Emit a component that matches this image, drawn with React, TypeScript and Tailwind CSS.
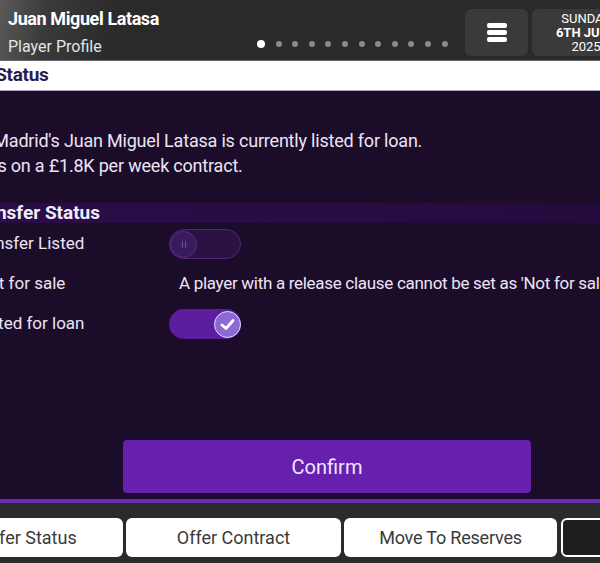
import React from "react";

const F = { fontFamily: '"Roboto", "Liberation Sans", sans-serif' };

function Toggle({ on }: { on: boolean }) {
  if (on) {
    return (
      <div className="relative h-[30px] w-[72px] shrink-0 rounded-full bg-[#5c1d9f]">
        <div className="absolute right-0 top-[1.5px] flex h-[27px] w-[27px] items-center justify-center rounded-full border-[1.5px] border-[#e6dcff] bg-[#8c6ad6]">
          <svg width="15" height="13" viewBox="0 0 15 13" fill="none">
            <path d="M2 7 L6 10.5 L13 2.5" stroke="white" strokeWidth="2.8" strokeLinecap="round" strokeLinejoin="round" />
          </svg>
        </div>
      </div>
    );
  }
  return (
    <div className="relative h-[30px] w-[72px] shrink-0 rounded-full border border-[#4f2679] bg-[#2a1242]">
      <div className="absolute left-0 top-[1px] flex h-[27px] w-[27px] items-center justify-center gap-[2px] rounded-full border border-[#5a2b8c] bg-[#3a1a5e]">
        <div className="h-[7px] w-[1px] bg-[#6a4a90]" />
        <div className="h-[7px] w-[1px] bg-[#6a4a90]" />
      </div>
    </div>
  );
}

export default function App() {
  const dots = Array.from({ length: 11 });
  return (
    <div className="relative h-[563px] w-[600px] overflow-hidden bg-[#1b0c29]" style={F}>
      {/* Header */}
      <div className="flex h-[61px] w-[600px] border-b border-[#6a6a6a] bg-[linear-gradient(100deg,#5a5a5a_0%,#3a3a3a_8%,#2a2a2a_20%,#2a2a2a_100%)]">
        <div className="flex w-[257px] shrink-0 flex-col pl-[8px] pt-[7px]">
          <div className="whitespace-nowrap text-[18px] font-bold leading-[24px] tracking-[-0.4px] text-white">Juan Miguel Latasa</div>
          <div className="mt-[5px] whitespace-nowrap text-[16px] leading-[22px] text-[#e4e4e4]">Player Profile</div>
        </div>
        <div className="flex items-center gap-[10.6px] self-end pb-[12px]">
          <div className="h-[8px] w-[8px] rounded-full bg-white" />
          {dots.map((_, i) => (
            <div key={i} className="h-[6px] w-[6px] rounded-full bg-[#8a8a8a]" />
          ))}
        </div>
        <div className="flex-1" />
        <div className="mt-[9px] flex h-[47px] w-[63px] shrink-0 flex-col items-center justify-center gap-[2px] rounded-[6px] bg-[#3a3a3a]">
          <div className="h-[5px] w-[20px] rounded-[2px] bg-white" />
          <div className="h-[5px] w-[20px] rounded-[2px] bg-white" />
          <div className="h-[5px] w-[20px] rounded-[2px] bg-white" />
        </div>
        <div className="ml-[4px] mr-[-40px] mt-[9px] flex h-[47px] w-[108px] shrink-0 flex-col items-center justify-center rounded-[6px] bg-[#3a3a3a] text-[13px] leading-[14px] text-white">
          <div>SUNDAY</div>
          <div className="font-bold">6TH JUNE</div>
          <div>2025</div>
        </div>
      </div>

      {/* White status bar */}
      <div className="flex h-[30px] items-center border-b border-[#b0a0c0] bg-white">
        <div className="ml-[-79px] whitespace-nowrap text-[19px] font-bold tracking-[-0.3px] text-[#2c1a4c]">Transfer Status</div>
      </div>

      {/* Main panel */}
      <div className="flex h-[408px] flex-col">
        <div className="mt-[37px] text-[18px] leading-[25px] tracking-[-0.2px] text-[#ece4f4]">
          <div className="ml-[-45px] whitespace-nowrap">Real Madrid's Juan Miguel Latasa is currently listed for loan.</div>
          <div className="ml-[-33px] whitespace-nowrap">He is on a £1.8K per week contract.</div>
        </div>
        <div className="mt-[25px] flex h-[20px] items-center bg-[linear-gradient(90deg,#2a0d48,#240b3e)]">
          <div className="ml-[-32px] whitespace-nowrap text-[19px] font-bold text-[#f2ecf8]">Transfer Status</div>
        </div>
        <div className="mt-[1px] flex h-[40px] items-center">
          <div className="ml-[-29px] w-[198px] shrink-0 whitespace-nowrap text-[17px] text-[#ece4f4]">Transfer Listed</div>
          <Toggle on={false} />
        </div>
        <div className="flex h-[40px] items-center">
          <div className="ml-[-23px] w-[202px] shrink-0 whitespace-nowrap text-[17px] text-[#ece4f4]">Not for sale</div>
          <div className="whitespace-nowrap text-[17px] tracking-[-0.3px] text-[#ece4f4]">A player with a release clause cannot be set as 'Not for sale'</div>
        </div>
        <div className="flex h-[40px] items-center">
          <div className="ml-[-24px] w-[193px] shrink-0 whitespace-nowrap text-[17px] text-[#ece4f4]">Listed for loan</div>
          <Toggle on={true} />
        </div>
        <div className="mt-[96px] flex pl-[123px]">
          <div className="flex h-[53px] w-[408px] items-center justify-center rounded-[4px] bg-[#671fae] text-[20px] text-[#f2e4ff]">
            Confirm
          </div>
        </div>
      </div>

      {/* Bottom bar */}
      <div className="h-[4px] bg-[#6a2db3]" />
      <div className="flex h-[60px] gap-[3px] bg-[#2b2b2b] pt-[15px]">
        <div className="ml-[-92px] flex h-[39px] w-[215px] shrink-0 items-center justify-center rounded-[6px] bg-white">
          <span className="whitespace-nowrap text-[18px] text-[#3a3a3a]">Transfer Status</span>
        </div>
        <div className="flex h-[39px] w-[215px] shrink-0 items-center justify-center rounded-[6px] bg-white text-[18px] text-[#3a3a3a]">
          Offer Contract
        </div>
        <div className="flex h-[39px] w-[213px] shrink-0 items-center justify-center rounded-[6px] bg-white text-[18px] tracking-[-0.2px] text-[#3a3a3a]">
          Move To Reserves
        </div>
        <div className="ml-[1px] h-[39px] w-[80px] shrink-0 rounded-[6px] border-2 border-white bg-[#1e1e1e]" />
      </div>
    </div>
  );
}
